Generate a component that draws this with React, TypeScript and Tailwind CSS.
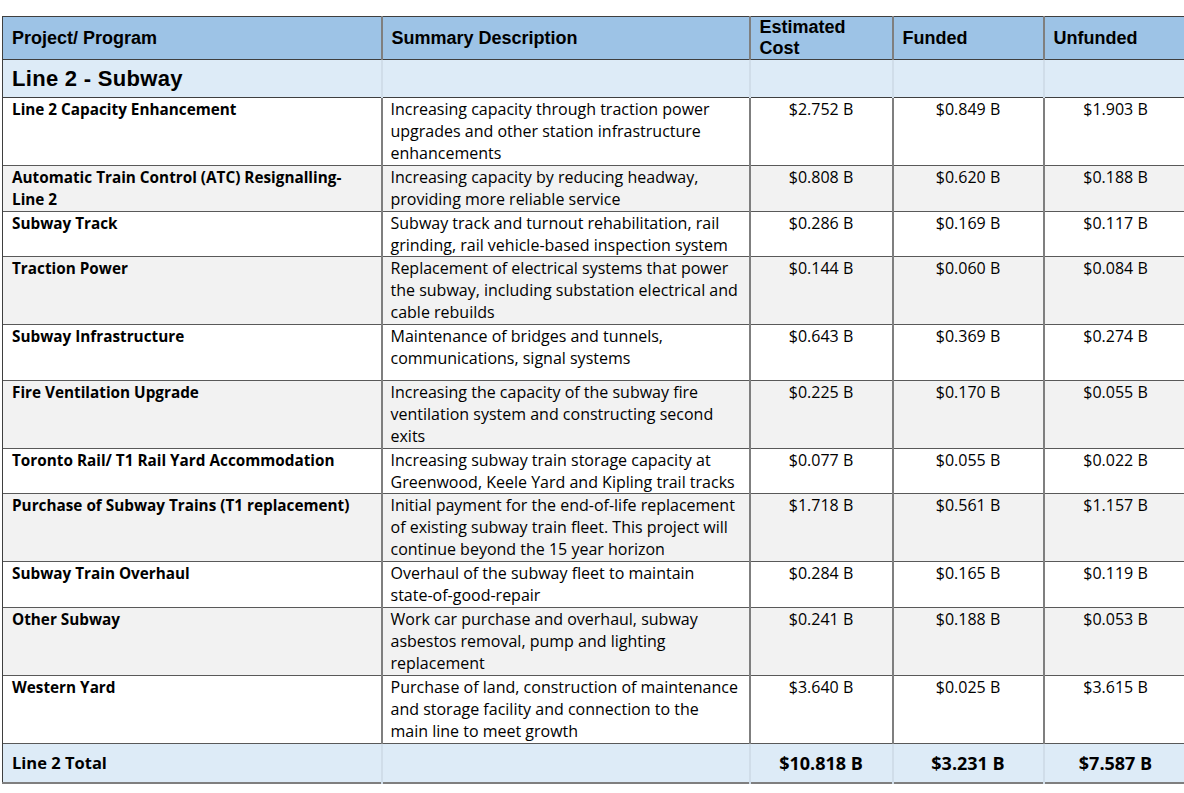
const rows = [
  {
    name: ['Line 2 Capacity Enhancement'],
    desc: ['Increasing capacity through traction power', 'upgrades and other station infrastructure', 'enhancements'],
    cost: '$2.752 B',
    funded: '$0.849 B',
    unfunded: '$1.903 B',
    h: 'h-[68px]',
  },
  {
    name: ['Automatic Train Control (ATC) Resignalling-', 'Line 2'],
    desc: ['Increasing capacity by reducing headway,', 'providing more reliable service'],
    cost: '$0.808 B',
    funded: '$0.620 B',
    unfunded: '$0.188 B',
    h: 'h-[46px]',
  },
  {
    name: ['Subway Track'],
    desc: ['Subway track and turnout rehabilitation, rail', 'grinding, rail vehicle-based inspection system'],
    cost: '$0.286 B',
    funded: '$0.169 B',
    unfunded: '$0.117 B',
    h: 'h-[45px]',
  },
  {
    name: ['Traction Power'],
    desc: ['Replacement of electrical systems that power', 'the subway, including substation electrical and', 'cable rebuilds'],
    cost: '$0.144 B',
    funded: '$0.060 B',
    unfunded: '$0.084 B',
    h: 'h-[68px]',
  },
  {
    name: ['Subway Infrastructure'],
    desc: ['Maintenance of bridges and tunnels,', 'communications, signal systems'],
    cost: '$0.643 B',
    funded: '$0.369 B',
    unfunded: '$0.274 B',
    h: 'h-[56px]',
  },
  {
    name: ['Fire Ventilation Upgrade'],
    desc: ['Increasing the capacity of the subway fire', 'ventilation system and constructing second', 'exits'],
    cost: '$0.225 B',
    funded: '$0.170 B',
    unfunded: '$0.055 B',
    h: 'h-[68px]',
  },
  {
    name: ['Toronto Rail/ T1 Rail Yard Accommodation'],
    desc: ['Increasing subway train storage capacity at', 'Greenwood, Keele Yard and Kipling trail tracks'],
    cost: '$0.077 B',
    funded: '$0.055 B',
    unfunded: '$0.022 B',
    h: 'h-[45px]',
  },
  {
    name: ['Purchase of Subway Trains (T1 replacement)'],
    desc: ['Initial payment for the end-of-life replacement', 'of existing subway train fleet. This project will', 'continue beyond the 15 year horizon'],
    cost: '$1.718 B',
    funded: '$0.561 B',
    unfunded: '$1.157 B',
    h: 'h-[68px]',
  },
  {
    name: ['Subway Train Overhaul'],
    desc: ['Overhaul of the subway fleet to maintain', 'state-of-good-repair'],
    cost: '$0.284 B',
    funded: '$0.165 B',
    unfunded: '$0.119 B',
    h: 'h-[46px]',
  },
  {
    name: ['Other Subway'],
    desc: ['Work car purchase and overhaul, subway', 'asbestos removal, pump and lighting', 'replacement'],
    cost: '$0.241 B',
    funded: '$0.188 B',
    unfunded: '$0.053 B',
    h: 'h-[68px]',
  },
  {
    name: ['Western Yard'],
    desc: ['Purchase of land, construction of maintenance', 'and storage facility and connection to the', 'main line to meet growth'],
    cost: '$3.640 B',
    funded: '$0.025 B',
    unfunded: '$3.615 B',
    h: 'h-[68px]',
  },
];

// font family + spacing only; sizes go on each cell so they don't clash
const body = "font-['Open_Sans','Noto_Sans',sans-serif] leading-[22px] text-black whitespace-nowrap overflow-hidden";
const head = "font-['Liberation_Sans',Arial,sans-serif] font-bold text-black whitespace-nowrap";

function Lines({ lines }: { lines: string[] }) {
  return (
    <>
      {lines.map((l) => (
        <div key={l}>{l}</div>
      ))}
    </>
  );
}

export default function App() {
  return (
    <div className="w-[1184px] h-[793px] overflow-hidden bg-white pt-4 pl-[2px]">
      <table className="table-fixed border-collapse w-[1200px]">
        <colgroup>
          <col className="w-[379px]" />
          <col className="w-[368px]" />
          <col className="w-[143px]" />
          <col className="w-[151px]" />
          <col className="w-[159px]" />
        </colgroup>
        <thead>
          <tr className="h-[43px] bg-[#9dc3e6] border-t border-b border-[#3f3f3f]">
            <th className={`${head} text-[18px] text-left px-[9px] border-l border-[#3f3f3f]`}>Project/ Program</th>
            <th className={`${head} text-[18px] text-left px-[9px] border-l-2 border-[#7f7f7f]`}>Summary Description</th>
            <th className={`${head} text-[18px] leading-[21px] text-left px-[9px] border-l-2 border-[#7f7f7f]`}>
              Estimated
              <br />
              Cost
            </th>
            <th className={`${head} text-[18px] text-left px-[9px] border-l-2 border-[#7f7f7f]`}>Funded</th>
            <th className={`${head} text-[18px] text-left px-[9px] border-l-2 border-[#7f7f7f]`}>Unfunded</th>
          </tr>
        </thead>
        <tbody>
          <tr className="h-[38px] bg-[#ddebf7] border-b border-[#3f3f3f]">
            <td className={`${head} text-[22px] tracking-[0.3px] px-[9px] border-l border-[#3f3f3f]`}>Line 2 - Subway</td>
            <td className="border-l-2 border-[#d0dde9]" />
            <td className="border-l-2 border-[#d0dde9]" />
            <td className="border-l-2 border-[#d0dde9]" />
            <td className="border-l-2 border-[#d0dde9]" />
          </tr>
          {rows.map((r, i) => (
            <tr key={r.name[0]} className={`${r.h} ${i % 2 === 1 ? 'bg-[#f2f2f2]' : 'bg-white'} border-b border-[#595959] align-top`}>
              <td className={`${body} text-[15.3px] font-bold px-[9px] border-l border-[#3f3f3f]`}>
                <Lines lines={r.name} />
              </td>
              <td className={`${body} text-[16px] px-[8px] border-l-2 border-[#7f7f7f]`}>
                <Lines lines={r.desc} />
              </td>
              <td className={`${body} text-[16px] text-center border-l-2 border-[#7f7f7f]`}>{r.cost}</td>
              <td className={`${body} text-[16px] text-center border-l-2 border-[#7f7f7f]`}>{r.funded}</td>
              <td className={`${body} text-[16px] text-center pr-[16px] border-l-2 border-[#7f7f7f]`}>{r.unfunded}</td>
            </tr>
          ))}
          <tr className="h-[39px] bg-[#ddebf7] border-b-2 border-[#7f7f7f]">
            <td className={`${body} text-[16.5px] font-bold px-[9px] border-l border-[#3f3f3f]`}>Line 2 Total</td>
            <td className="border-l-2 border-[#d0dde9]" />
            <td className={`${body} text-[18px] font-bold text-center border-l-2 border-[#d0dde9]`}>$10.818 B</td>
            <td className={`${body} text-[18px] font-bold text-center border-l-2 border-[#d0dde9]`}>$3.231 B</td>
            <td className={`${body} text-[18px] font-bold text-center pr-[16px] border-l-2 border-[#d0dde9]`}>$7.587 B</td>
          </tr>
        </tbody>
      </table>
    </div>
  );
}
